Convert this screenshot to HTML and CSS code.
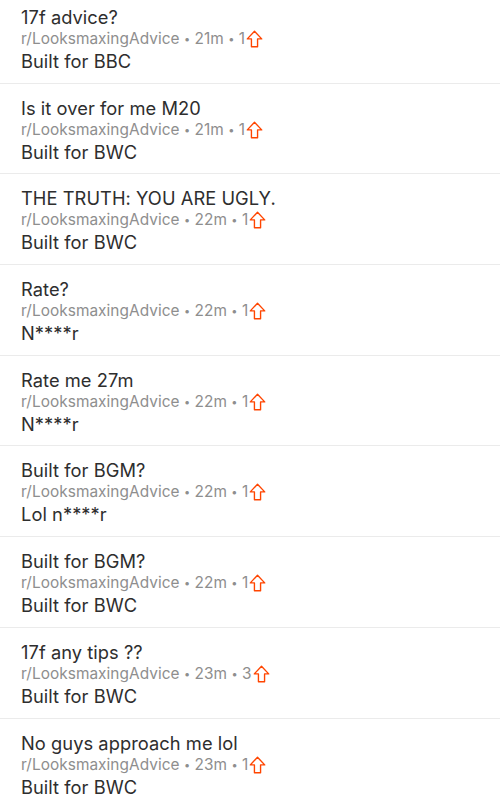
FILE: index.html
```html
<!DOCTYPE html>
<html lang="en">
<head>
    <meta charset="UTF-8">
    <meta name="viewport" content="width=device-width, initial-scale=1.0">
    <title>Comments</title>
    <link rel="stylesheet" href="styles.css">
</head>
<body>
    <ul class="feed">
        <li class="item">
            <div class="title">17f advice?</div>
            <div class="meta">r/LooksmaxingAdvice <span class="dot">•</span> 21m <span class="dot">•</span> 1<svg class="up" viewBox="0 0 16 17"><path d="M8 1.2 L14.8 8.4 H10.9 V15.8 H5.1 V8.4 H1.2 Z"/></svg></div>
            <div class="body">Built for BBC</div>
        </li>
        <li class="item">
            <div class="title">Is it over for me M20</div>
            <div class="meta">r/LooksmaxingAdvice <span class="dot">•</span> 21m <span class="dot">•</span> 1<svg class="up" viewBox="0 0 16 17"><path d="M8 1.2 L14.8 8.4 H10.9 V15.8 H5.1 V8.4 H1.2 Z"/></svg></div>
            <div class="body">Built for BWC</div>
        </li>
        <li class="item">
            <div class="title">THE TRUTH: YOU ARE UGLY.</div>
            <div class="meta">r/LooksmaxingAdvice <span class="dot">•</span> 22m <span class="dot">•</span> 1<svg class="up" viewBox="0 0 16 17"><path d="M8 1.2 L14.8 8.4 H10.9 V15.8 H5.1 V8.4 H1.2 Z"/></svg></div>
            <div class="body">Built for BWC</div>
        </li>
        <li class="item">
            <div class="title">Rate?</div>
            <div class="meta">r/LooksmaxingAdvice <span class="dot">•</span> 22m <span class="dot">•</span> 1<svg class="up" viewBox="0 0 16 17"><path d="M8 1.2 L14.8 8.4 H10.9 V15.8 H5.1 V8.4 H1.2 Z"/></svg></div>
            <div class="body">N****r</div>
        </li>
        <li class="item">
            <div class="title">Rate me 27m</div>
            <div class="meta">r/LooksmaxingAdvice <span class="dot">•</span> 22m <span class="dot">•</span> 1<svg class="up" viewBox="0 0 16 17"><path d="M8 1.2 L14.8 8.4 H10.9 V15.8 H5.1 V8.4 H1.2 Z"/></svg></div>
            <div class="body">N****r</div>
        </li>
        <li class="item">
            <div class="title">Built for BGM?</div>
            <div class="meta">r/LooksmaxingAdvice <span class="dot">•</span> 22m <span class="dot">•</span> 1<svg class="up" viewBox="0 0 16 17"><path d="M8 1.2 L14.8 8.4 H10.9 V15.8 H5.1 V8.4 H1.2 Z"/></svg></div>
            <div class="body">Lol n****r</div>
        </li>
        <li class="item">
            <div class="title">Built for BGM?</div>
            <div class="meta">r/LooksmaxingAdvice <span class="dot">•</span> 22m <span class="dot">•</span> 1<svg class="up" viewBox="0 0 16 17"><path d="M8 1.2 L14.8 8.4 H10.9 V15.8 H5.1 V8.4 H1.2 Z"/></svg></div>
            <div class="body">Built for BWC</div>
        </li>
        <li class="item">
            <div class="title">17f any tips ??</div>
            <div class="meta">r/LooksmaxingAdvice <span class="dot">•</span> 23m <span class="dot">•</span> 3<svg class="up" viewBox="0 0 16 17"><path d="M8 1.2 L14.8 8.4 H10.9 V15.8 H5.1 V8.4 H1.2 Z"/></svg></div>
            <div class="body">Built for BWC</div>
        </li>
        <li class="item">
            <div class="title">No guys approach me lol</div>
            <div class="meta">r/LooksmaxingAdvice <span class="dot">•</span> 23m <span class="dot">•</span> 1<svg class="up" viewBox="0 0 16 17"><path d="M8 1.2 L14.8 8.4 H10.9 V15.8 H5.1 V8.4 H1.2 Z"/></svg></div>
            <div class="body">Built for BWC</div>
        </li>
    </ul>
</body>
</html>
```

FILE: styles.css
```css
/* Page de base */
body {
    margin: 0;
    background: #fff;
    font-family: Inter, "Liberation Sans", sans-serif;
    overflow: hidden;
}

/* Liste des commentaires */
.feed {
    list-style: none;
    margin: -7px 0 0 0;
    padding: 0;
}

.item {
    padding: 13px 21px 10.7px 21px;
    border-bottom: 1px solid #ebebeb;
}

.title,
.body {
    font-size: 18.3px;
    line-height: 22px;
    color: #2e2e2e;
    letter-spacing: 0.05px;
}

.meta {
    font-size: 15.4px;
    line-height: 22px;
    color: #8e8e8e;
    letter-spacing: 0.05px;
    white-space: pre;
    display: flex;
    align-items: center;
}

/* Point separateur */
.dot {
    font-size: 11px;
}

/* Fleche de vote */
.up {
    width: 17px;
    height: 18px;
    margin-left: 1px;
    fill: none;
    stroke: #ff4500;
    stroke-width: 1.3;
    stroke-linejoin: round;
}
```
